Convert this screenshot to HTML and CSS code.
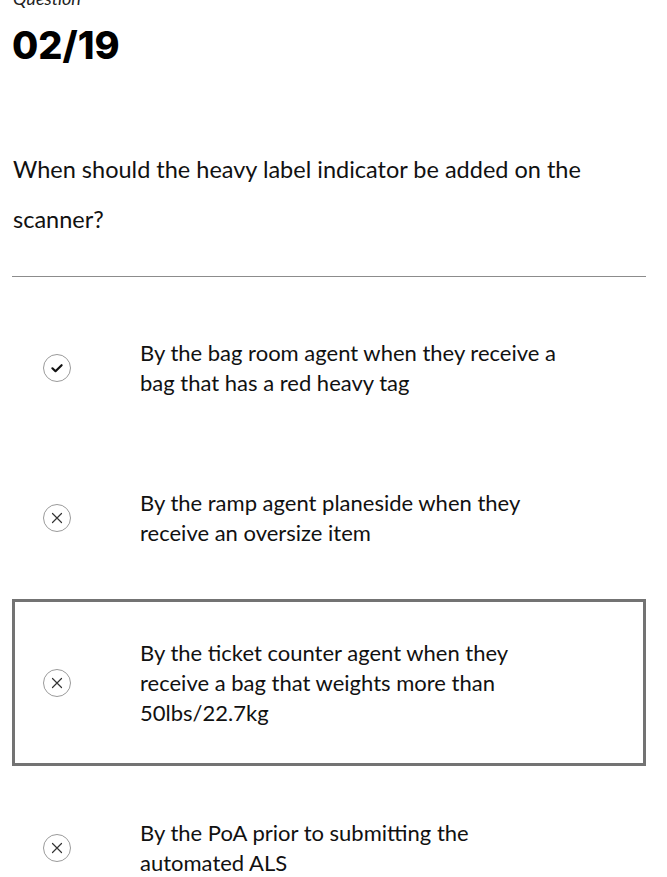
FILE: index.html
```html
<!DOCTYPE html>
<html lang="en">
<head>
<meta charset="utf-8">
<title>Question 02/19</title>
<link rel="stylesheet" href="styles.css">
</head>
<body>
<main class="page">
  <div class="eyebrow">Question</div>
  <h1 class="counter">02/19</h1>
  <p class="question">When should the heavy label indicator be added on the scanner?</p>
  <hr class="divider">
  <ul class="options">
    <li class="option">
      <span class="mark">
        <svg viewBox="0 0 28 28" width="28" height="28"><circle cx="14" cy="14" r="13.5" fill="none" stroke="#9a9a9a" stroke-width="1"/><path d="M9.4 14.3 L12.5 17.2 L18.6 11.2" fill="none" stroke="#111" stroke-width="2.2" stroke-linecap="round" stroke-linejoin="round"/></svg>
      </span>
      <span class="label">By the bag room agent when they receive a bag that has a red heavy tag</span>
    </li>
    <li class="option">
      <span class="mark">
        <svg viewBox="0 0 28 28" width="28" height="28"><circle cx="14" cy="14" r="13.5" fill="none" stroke="#9a9a9a" stroke-width="1"/><path d="M9.5 9.5 L18.5 18.5 M18.5 9.5 L9.5 18.5" fill="none" stroke="#333" stroke-width="1.2" stroke-linecap="round"/></svg>
      </span>
      <span class="label">By the ramp agent planeside when they receive an oversize item</span>
    </li>
    <li class="option selected">
      <span class="mark">
        <svg viewBox="0 0 28 28" width="28" height="28"><circle cx="14" cy="14" r="13.5" fill="none" stroke="#9a9a9a" stroke-width="1"/><path d="M9.5 9.5 L18.5 18.5 M18.5 9.5 L9.5 18.5" fill="none" stroke="#333" stroke-width="1.2" stroke-linecap="round"/></svg>
      </span>
      <span class="label">By the ticket counter agent when they receive a bag that weights more than 50lbs/22.7kg</span>
    </li>
    <li class="option">
      <span class="mark">
        <svg viewBox="0 0 28 28" width="28" height="28"><circle cx="14" cy="14" r="13.5" fill="none" stroke="#9a9a9a" stroke-width="1"/><path d="M9.5 9.5 L18.5 18.5 M18.5 9.5 L9.5 18.5" fill="none" stroke="#333" stroke-width="1.2" stroke-linecap="round"/></svg>
      </span>
      <span class="label">By the PoA prior to submitting the automated ALS</span>
    </li>
  </ul>
</main>
</body>
</html>
```

FILE: styles.css
```css
* { box-sizing: border-box; }
html, body { margin: 0; padding: 0; background: #fff; }
body {
  font-family: "Source Sans Pro", Lato, "Liberation Sans", sans-serif;
  color: #111;
  overflow: hidden;
}
.page {
  width: 634px;
  margin-left: 12px;
}
.eyebrow {
  font-style: italic;
  font-size: 18px;
  line-height: 22px;
  margin-top: -13px;
  padding-left: 1px;
  color: #222;
}
.counter {
  font-family: Inter, "Liberation Sans", sans-serif;
  font-weight: 800;
  font-size: 38px;
  line-height: 44px;
  margin: 14px 0 0 0;
  color: #000;
}
.question {
  font-size: 23.5px;
  line-height: 50px;
  margin: 77px 0 0 0;
  padding-left: 1px;
}
.divider {
  border: 0;
  border-top: 1px solid #8c8c8c;
  margin: 32px 0 0 0;
}
.options {
  list-style: none;
  margin: 22px 0 0 0;
  padding: 0;
  display: flex;
  flex-direction: column;
  gap: 13px;
}
.option {
  display: flex;
  align-items: center;
  gap: 69px;
  padding: 35.5px 20px 35.5px 28px;
  border: 3px solid transparent;
}
.option.selected {
  border-color: #737373;
}
.mark {
  flex: 0 0 28px;
  width: 28px;
  height: 28px;
  display: block;
}
.mark svg { display: block; }
.label {
  font-size: 22px;
  line-height: 30px;
  max-width: 432px;
}
```
